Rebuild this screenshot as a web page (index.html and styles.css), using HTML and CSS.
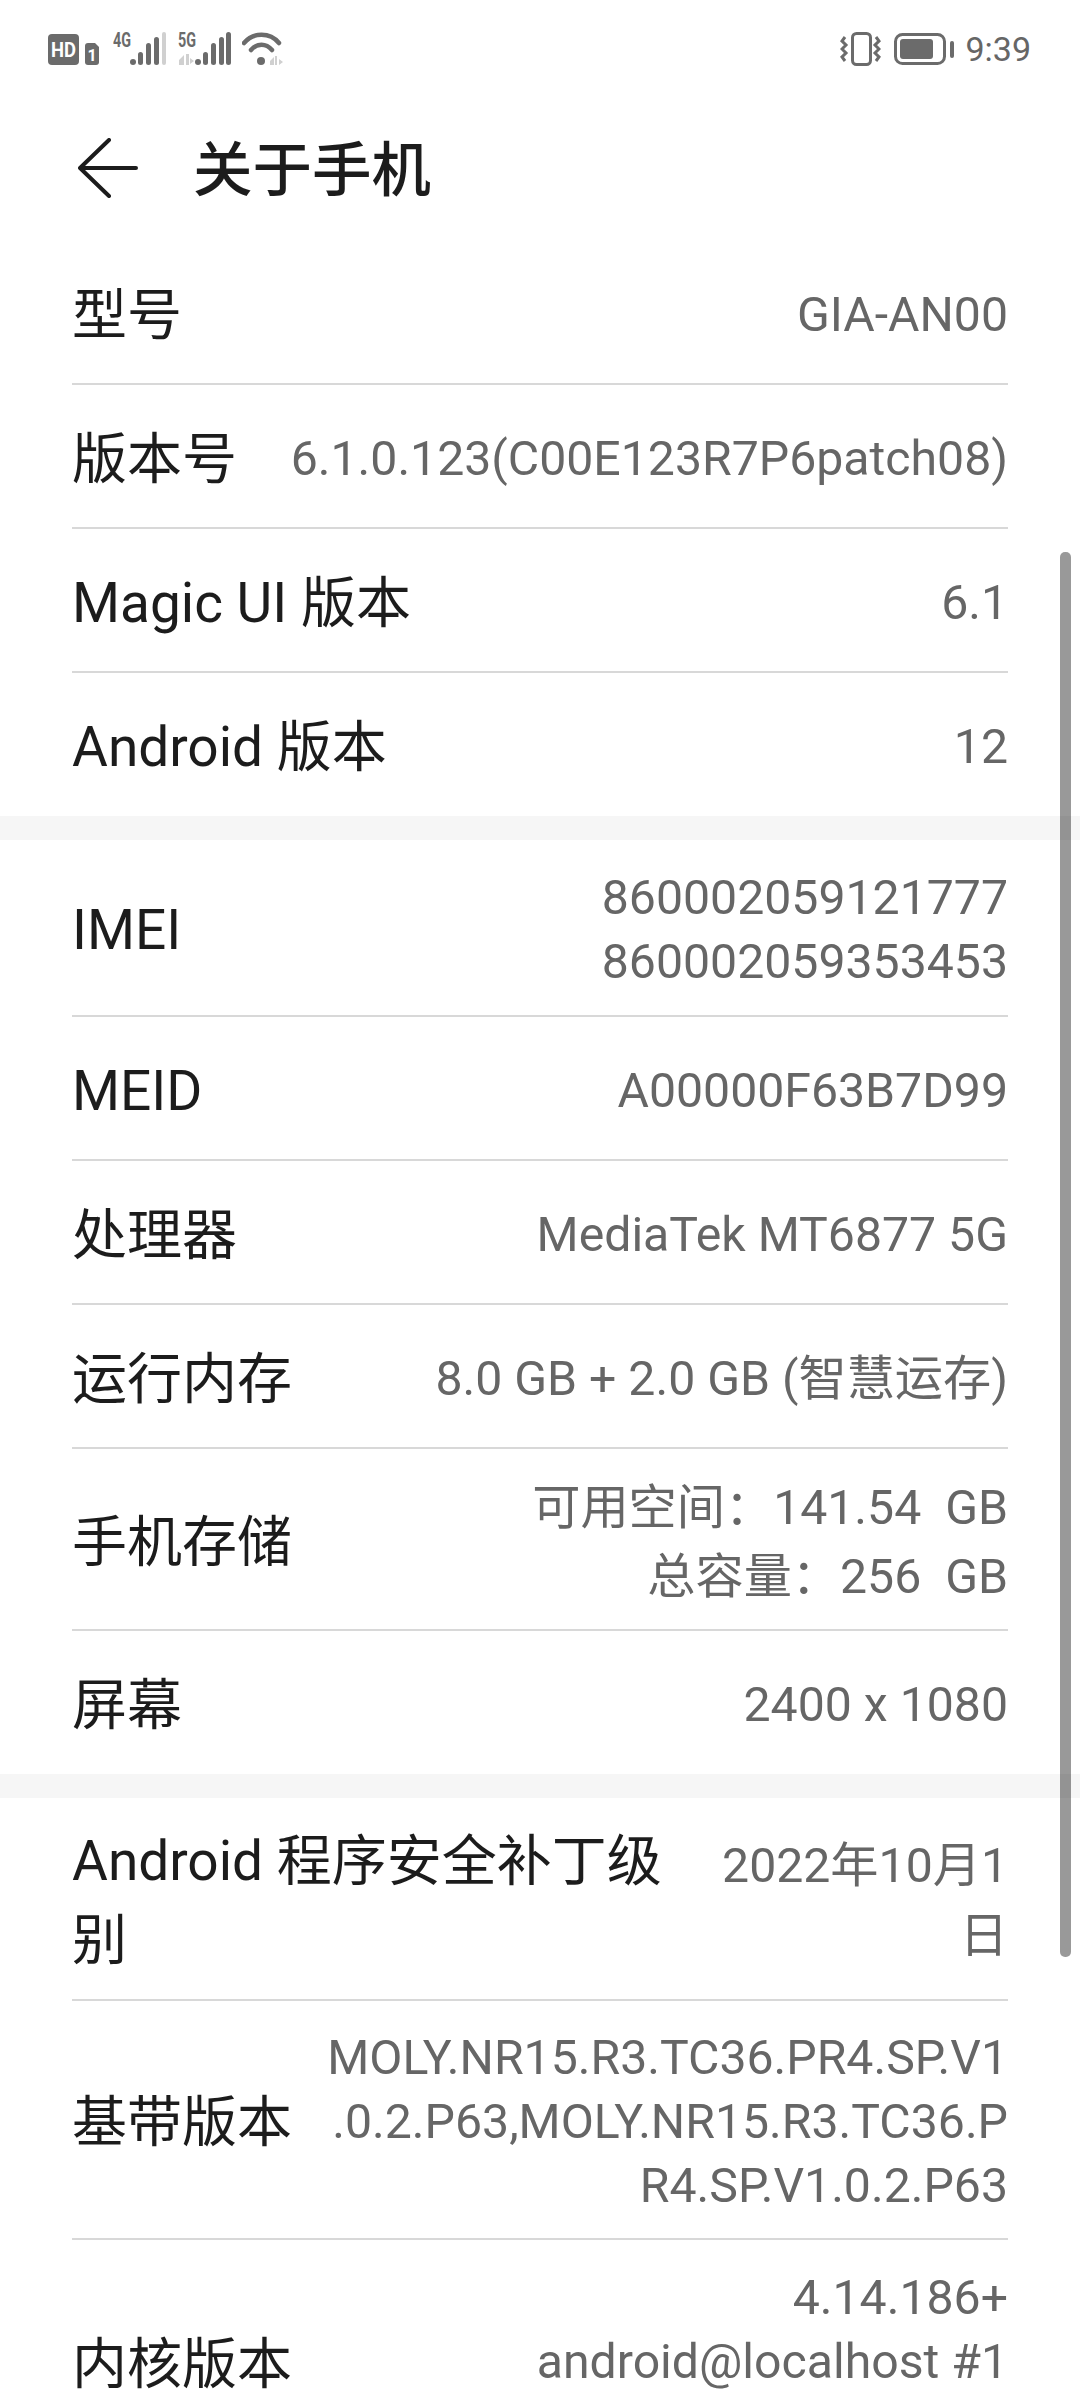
FILE: index.html
```html
<!DOCTYPE html>
<html lang="zh-CN">
<head>
    <meta charset="UTF-8">
    <meta name="viewport" content="width=device-width, initial-scale=1.0">
    <title>关于手机</title>
    <link rel="stylesheet" href="styles.css">
</head>
<body>
<div class="phone">
    <div class="status-bar">
        <div class="status-left">
            <svg width="54" height="34" viewBox="0 0 54 34">
                <rect x="0" y="2" width="31" height="31" rx="4" fill="#6b6b6b"/>
                <text x="15.500" y="25" class="hd-text" textLength="25" lengthAdjust="spacingAndGlyphs">HD</text>
                <path d="M37 14a3 3 0 0 1 3-3h7l4 4v15a3 3 0 0 1-3 3h-8a3 3 0 0 1-3-3z" fill="#6b6b6b"/>
                <text x="44" y="29" class="sim-text">1</text>
            </svg>
            <svg width="54" height="40" viewBox="0 -6 54 40">
                <text x="0" y="15" class="net-text" textLength="18" lengthAdjust="spacingAndGlyphs">4G</text>
                <circle cx="20" cy="30" r="3" fill="#6b6b6b"/>
                <rect x="25" y="20" width="5" height="13" rx="2.500" fill="#6b6b6b"/>
                <rect x="33" y="11" width="5" height="22" rx="2.500" fill="#6b6b6b"/>
                <rect x="41" y="5" width="5" height="28" rx="2.500" fill="#6b6b6b"/>
                <rect x="49" y="0" width="4" height="33" rx="2" fill="#d0d0d0"/>
            </svg>
            <svg width="53" height="40" viewBox="0 -6 53 40">
                <text x="0" y="15" class="net-text" textLength="18" lengthAdjust="spacingAndGlyphs">5G</text>
                <path d="M1 28l5-5v10H1zM8 22h3v11H8zM12 26l4 3-4 3z" fill="#d0d0d0"/>
                <circle cx="20" cy="30" r="3" fill="#6b6b6b"/>
                <rect x="25" y="20" width="5" height="13" rx="2.500" fill="#6b6b6b"/>
                <rect x="33" y="11" width="5" height="22" rx="2.500" fill="#6b6b6b"/>
                <rect x="41" y="5" width="5" height="28" rx="2.500" fill="#6b6b6b"/>
                <rect x="48" y="0" width="5" height="33" rx="2.500" fill="#6b6b6b"/>
            </svg>
            <svg width="42" height="34" viewBox="0 0 42 34" fill="none" stroke="#6b6b6b" stroke-width="4.500" stroke-linecap="round">
                <path d="M2 11C11 0 28 0 37 11"/>
                <path d="M9 18C15 11 24 11 30 18"/>
                <circle cx="19" cy="29" r="4" fill="#6b6b6b" stroke="none"/>
                <path d="M28 29l4-4v8h-4zM33 24h2v9h-2zM37 27l4 3-4 3z" fill="#d0d0d0" stroke="none"/>
            </svg>
        </div>
        <div class="status-right">
            <svg class="vibrate" width="41" height="34" viewBox="0 0 41 34" fill="none" stroke="#6b6b6b">
                <rect x="12.500" y="1.500" width="18" height="31" rx="4" stroke-width="3"/>
                <path d="M5 5l-3 4 4 4-4 4 4 4-4 4 3 4" stroke-width="3"/>
                <path d="M36 5l3 4-4 4 4 4-4 4 4 4-3 4" stroke-width="3"/>
            </svg>
            <svg class="battery" width="61" height="34" viewBox="0 0 61 34">
                <rect x="1.500" y="2.500" width="49" height="29" rx="7" fill="none" stroke="#6b6b6b" stroke-width="3"/>
                <rect x="6" y="7" width="33" height="20" rx="3" fill="#6b6b6b"/>
                <rect x="56" y="9" width="4" height="17" rx="2" fill="#6b6b6b"/>
            </svg>
            <span class="clock">9:39</span>
        </div>
    </div>

    <div class="title-bar">
        <svg class="back" width="60" height="60" viewBox="0 0 60 60" fill="none" stroke="#1c1c1c" stroke-width="4" stroke-linecap="round" stroke-linejoin="round">
            <path d="M31 2L2 30l29 28M2 30h56"/>
        </svg>
        <h1 class="title">关于手机</h1>
    </div>

    <div class="group">
        <div class="row"><span class="label">型号</span><span class="value">GIA-AN00</span></div>
        <div class="row"><span class="label">版本号</span><span class="value">6.1.0.123(C00E123R7P6patch08)</span></div>
        <div class="row"><span class="label">Magic UI 版本</span><span class="value">6.1</span></div>
        <div class="row"><span class="label">Android 版本</span><span class="value">12</span></div>
    </div>
    <div class="band"></div>
    <div class="group">
        <div class="row row-imei"><span class="label">IMEI</span><span class="value">860002059121777<br>860002059353453</span></div>
        <div class="row"><span class="label">MEID</span><span class="value">A00000F63B7D99</span></div>
        <div class="row"><span class="label">处理器</span><span class="value">MediaTek MT6877 5G</span></div>
        <div class="row"><span class="label">运行内存</span><span class="value">8.0 GB + 2.0 GB (智慧运存)</span></div>
        <div class="row row-storage"><span class="label">手机存储</span><span class="value">可用空间：141.54&nbsp; GB<br>总容量：256&nbsp; GB</span></div>
        <div class="row"><span class="label">屏幕</span><span class="value">2400 x 1080</span></div>
    </div>
    <div class="band"></div>
    <div class="group">
        <div class="row row-patch"><span class="label label-wrap">Android 程序安全补丁级别</span><span class="value value-narrow">2022年10月1日</span></div>
        <div class="row row-baseband"><span class="label">基带版本</span><span class="value">MOLY.NR15.R3.TC36.PR4.SP.V1<br>.0.2.P63,MOLY.NR15.R3.TC36.P<br>R4.SP.V1.0.2.P63</span></div>
        <div class="row row-kernel"><span class="label">内核版本</span><span class="value">4.14.186+<br>android@localhost #1</span></div>
    </div>

    <div class="scrollbar"></div>
</div>
</body>
</html>
```

FILE: styles.css
```css
* {
    box-sizing: border-box;
}
body {
    margin: 0;
    background: #fff;
}
.phone {
    position: relative;
    width: 1080px;
    height: 2400px;
    overflow: hidden;
    background: #fff;
    font-family: Roboto, "Noto Sans CJK SC", sans-serif;
}

/* status bar */
.status-bar {
    display: flex;
    justify-content: space-between;
    align-items: flex-start;
    height: 100px;
    padding: 26px 49px 0 48px;
}
.status-left, .status-right {
    display: flex;
}
.status-left {
    align-items: flex-end;
    gap: 11px;
}
.status-right {
    align-items: center;
    margin-top: 6px;
}
.vibrate {
    margin-right: 13px;
}
.battery {
    margin-right: 10px;
}
.hd-text {
    font: bold 20px Roboto, sans-serif;
    fill: #fff;
    text-anchor: middle;
}
.sim-text {
    font: bold 16px Roboto, sans-serif;
    fill: #fff;
    text-anchor: middle;
}
.net-text {
    font: bold 20px Roboto, sans-serif;
    fill: #6b6b6b;
}
.clock {
    font-size: 34px;
    line-height: 34px;
    color: #666;
}

/* title */
.title-bar {
    display: flex;
    align-items: center;
    height: 141px;
    padding: 0 0 5px 78px;
}
.back {
    flex: none;
}
.title {
    margin: 0 0 0 55px;
    padding-bottom: 6px;
    font-size: 59.500px;
    font-weight: 500;
    color: #1c1c1c;
}

/* rows */
.group {
    padding: 0 72px 0 72px;
}
.row {
    display: flex;
    justify-content: space-between;
    align-items: center;
    min-height: 144px;
    border-bottom: 2px solid #d8d8d8;
}
.group .row:last-child {
    min-height: 143px;
    border-bottom: none;
}
.label {
    flex: none;
    padding-top: 5px;
    font-size: 55px;
    line-height: 78px;
    color: #1c1c1c;
}
.value {
    padding-top: 5px;
    font-size: 48.200px;
    line-height: 64px;
    color: #666;
    text-align: right;
}
.row-imei {
    height: 177px;
}
.row-storage {
    height: 182px;
}
.row-storage .value {
    line-height: 69px;
}
.row-patch {
    height: 203px;
}
.label-wrap {
    width: 610px;
    line-height: 79px;
}
.value-narrow {
    width: 300px;
    line-height: 70px;
}
.row-baseband {
    height: 239px;
}
.group .row-baseband:nth-child(2) {
    border-bottom: 2px solid #d8d8d8;
}
.group .row-kernel {
    min-height: 0;
    align-items: flex-start;
}
.row-kernel .label {
    margin-top: 80px;
}
.row-kernel .value {
    margin-top: 21px;
}
.band {
    height: 24px;
    background: #f6f6f6;
}
.scrollbar {
    position: absolute;
    left: 1060px;
    top: 552px;
    width: 11px;
    height: 1405px;
    border-radius: 5px;
    background: rgba(0, 0, 0, 0.4);
}
```
